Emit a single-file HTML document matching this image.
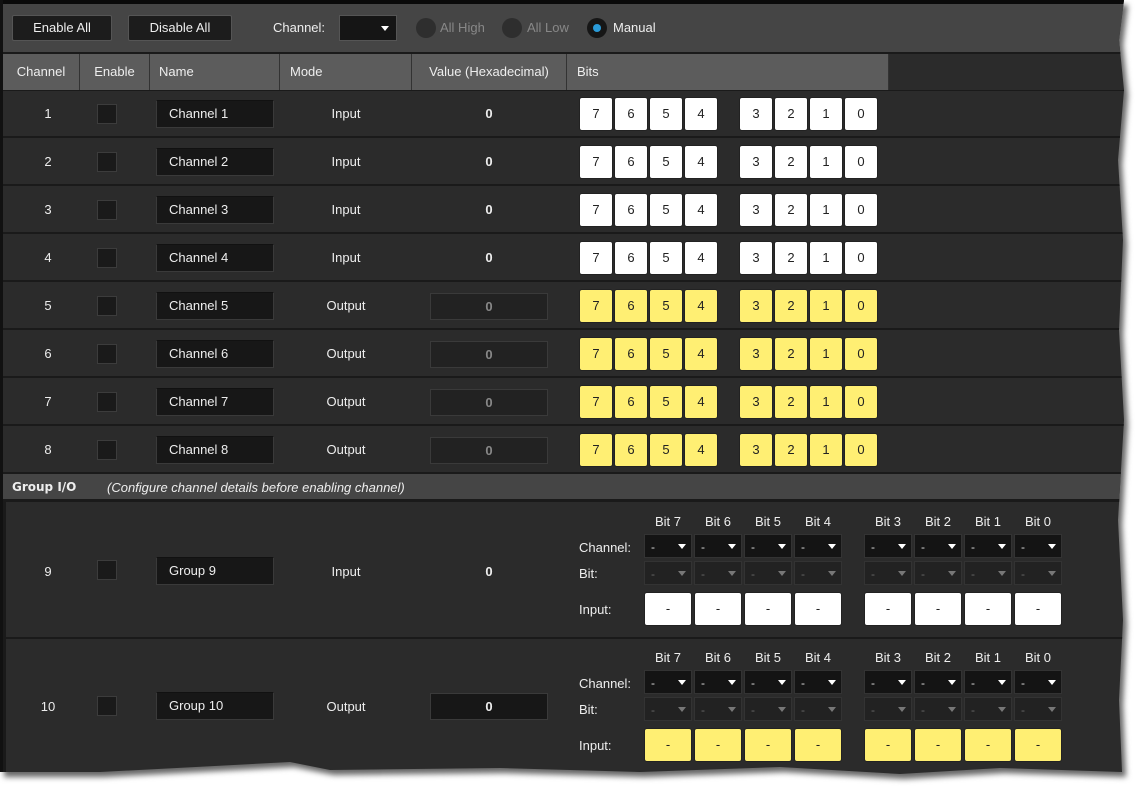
<!DOCTYPE html>
<html><head><meta charset="utf-8"><style>
*{box-sizing:border-box;margin:0;padding:0}
body{width:1141px;height:794px;background:#fff;position:relative;overflow:hidden;font-family:"Liberation Sans",sans-serif;font-size:13px;color:#eee}
.a{position:absolute}
.shape{clip-path:polygon(0 0,1124px 0,1119px 40px,1124px 90px,1118px 160px,1123px 240px,1119px 330px,1124px 420px,1118px 520px,1123px 620px,1119px 700px,1122px 772px,1000px 768px,900px 774px,780px 767px,640px 772px,500px 768px,330px 770px,290px 762px,100px 772px,0 772px);width:1124px;height:778px}
#shadowwrap{left:4px;top:5px;filter:blur(3px)}
#shadow{background:#666}
#wrap{left:0;top:0;background:#2b2b2b;overflow:hidden}
.btn{background:#1c1c1c;border:1px solid #555;border-radius:2px;color:#eee;text-align:center;line-height:24px;height:26px}
.hdr{background:#5c5c5c;color:#eee;line-height:36px;border-right:1px solid #333;padding-left:6px}
.sep{height:2px;background:#1a1a1a;left:3px;width:1121px}
.c{text-align:center;width:60px;margin-left:-30px}
.cb{width:20px;height:20px;background:#1a1a1a;border:1px solid #3c3c3c}
.nm{width:118px;height:28px;background:#171717;border:1px solid #3a3a3a;border-top-color:#111;padding-left:12px;line-height:26px}
.bit{width:34px;height:34px;background:#fff;border:1px solid #222;border-radius:3px;color:#222;text-align:center;line-height:32px}
.bit.y,.in.y{background:#ffef73}
.vb{width:118px;height:27px;background:#222;border:1px solid #3a3a3a;color:#888;font-weight:bold;text-align:center;line-height:25px}
.dd{width:48px;height:24px;background:#141414;border:1px solid #333;color:#ddd;font-size:12px;padding-left:6px;line-height:24px}
.dd:after{content:"";position:absolute;right:5px;top:9px;border:4px solid transparent;border-top:5px solid #fff}
.dd.g{background:#222;color:#666}
.dd.g:after{border-top-color:#777}
.in{width:48px;height:34px;background:#fff;border:1px solid #222;border-radius:3px;color:#222;text-align:center;line-height:32px}
.bl{width:48px;text-align:center;color:#eee}
</style></head><body>
<div id="shadowwrap" class="a"><div id="shadow" class="shape"></div></div>
<div id="wrap" class="a shape">
<div class="a" style="left:0;top:0;width:1124px;height:4px;background:#0a0a0a"></div>
<div class="a" style="left:0;top:0;width:3px;height:778px;background:#111"></div>
<div class="a" style="left:3px;top:4px;width:1121px;height:48px;background:#454545"></div>
<div class="a" style="left:3px;top:52px;width:1121px;height:2px;background:#1a1a1a"></div>
<div class="a btn" style="left:12px;top:15px;width:100px">Enable All</div>
<div class="a btn" style="left:128px;top:15px;width:104px">Disable All</div>
<div class="a" style="left:273px;top:20px">Channel:</div>
<div class="a" style="left:339px;top:15px;width:58px;height:26px;background:#151515;border:1px solid #555"></div>
<div class="a" style="left:381px;top:26px;border:4px solid transparent;border-top:5px solid #fff"></div>
<div class="a" style="left:416px;top:18px;width:20px;height:20px;border-radius:50%;background:#2e2e2e"></div>
<div class="a" style="left:440px;top:20px;color:#888">All High</div>
<div class="a" style="left:502px;top:18px;width:20px;height:20px;border-radius:50%;background:#2e2e2e"></div>
<div class="a" style="left:527px;top:20px;color:#888">All Low</div>
<div class="a" style="left:587px;top:18px;width:20px;height:20px;border-radius:50%;background:#161616"></div>
<div class="a" style="left:593px;top:24px;width:8px;height:8px;border-radius:50%;background:#2a9bd8"></div>
<div class="a" style="left:613px;top:20px;color:#eee">Manual</div>

<div class="a hdr" style="left:3px;top:54px;width:77px;text-align:center;padding:0">Channel</div>
<div class="a hdr" style="left:80px;top:54px;width:70px;text-align:center;padding:0">Enable</div>
<div class="a hdr" style="left:150px;top:54px;width:130px;padding-left:9px">Name</div>
<div class="a hdr" style="left:280px;top:54px;width:132px;padding-left:10px">Mode</div>
<div class="a hdr" style="left:412px;top:54px;width:155px;text-align:center;padding:0">Value (Hexadecimal)</div>
<div class="a hdr" style="left:567px;top:54px;width:322px;padding-left:10px">Bits</div>
<div class="a hdr" style="left:889px;top:54px;width:235px;border:none"></div>
<div class="a" style="left:3px;top:90px;width:1121px;height:1px;background:#1a1a1a"></div>

<div class="a" style="left:0;top:90px">
<div class="a c" style="left:48px;top:16px">1</div><div class="a cb" style="left:97px;top:14px"></div><div class="a nm" style="left:156px;top:10px">Channel 1</div><div class="a c" style="left:346px;top:16px">Input</div><div class="a c" style="left:489px;top:16px;font-weight:bold">0</div>
<div class="a bit" style="left:579px;top:7px">7</div><div class="a bit" style="left:614px;top:7px">6</div><div class="a bit" style="left:649px;top:7px">5</div><div class="a bit" style="left:684px;top:7px">4</div><div class="a bit" style="left:739px;top:7px">3</div><div class="a bit" style="left:774px;top:7px">2</div><div class="a bit" style="left:809px;top:7px">1</div><div class="a bit" style="left:844px;top:7px">0</div>
<div class="a sep" style="top:46px"></div></div>
<div class="a" style="left:0;top:138px">
<div class="a c" style="left:48px;top:16px">2</div><div class="a cb" style="left:97px;top:14px"></div><div class="a nm" style="left:156px;top:10px">Channel 2</div><div class="a c" style="left:346px;top:16px">Input</div><div class="a c" style="left:489px;top:16px;font-weight:bold">0</div>
<div class="a bit" style="left:579px;top:7px">7</div><div class="a bit" style="left:614px;top:7px">6</div><div class="a bit" style="left:649px;top:7px">5</div><div class="a bit" style="left:684px;top:7px">4</div><div class="a bit" style="left:739px;top:7px">3</div><div class="a bit" style="left:774px;top:7px">2</div><div class="a bit" style="left:809px;top:7px">1</div><div class="a bit" style="left:844px;top:7px">0</div>
<div class="a sep" style="top:46px"></div></div>
<div class="a" style="left:0;top:186px">
<div class="a c" style="left:48px;top:16px">3</div><div class="a cb" style="left:97px;top:14px"></div><div class="a nm" style="left:156px;top:10px">Channel 3</div><div class="a c" style="left:346px;top:16px">Input</div><div class="a c" style="left:489px;top:16px;font-weight:bold">0</div>
<div class="a bit" style="left:579px;top:7px">7</div><div class="a bit" style="left:614px;top:7px">6</div><div class="a bit" style="left:649px;top:7px">5</div><div class="a bit" style="left:684px;top:7px">4</div><div class="a bit" style="left:739px;top:7px">3</div><div class="a bit" style="left:774px;top:7px">2</div><div class="a bit" style="left:809px;top:7px">1</div><div class="a bit" style="left:844px;top:7px">0</div>
<div class="a sep" style="top:46px"></div></div>
<div class="a" style="left:0;top:234px">
<div class="a c" style="left:48px;top:16px">4</div><div class="a cb" style="left:97px;top:14px"></div><div class="a nm" style="left:156px;top:10px">Channel 4</div><div class="a c" style="left:346px;top:16px">Input</div><div class="a c" style="left:489px;top:16px;font-weight:bold">0</div>
<div class="a bit" style="left:579px;top:7px">7</div><div class="a bit" style="left:614px;top:7px">6</div><div class="a bit" style="left:649px;top:7px">5</div><div class="a bit" style="left:684px;top:7px">4</div><div class="a bit" style="left:739px;top:7px">3</div><div class="a bit" style="left:774px;top:7px">2</div><div class="a bit" style="left:809px;top:7px">1</div><div class="a bit" style="left:844px;top:7px">0</div>
<div class="a sep" style="top:46px"></div></div>
<div class="a" style="left:0;top:282px">
<div class="a c" style="left:48px;top:16px">5</div><div class="a cb" style="left:97px;top:14px"></div><div class="a nm" style="left:156px;top:10px">Channel 5</div><div class="a c" style="left:346px;top:16px">Output</div><div class="a vb" style="left:430px;top:11px">0</div>
<div class="a bit y" style="left:579px;top:7px">7</div><div class="a bit y" style="left:614px;top:7px">6</div><div class="a bit y" style="left:649px;top:7px">5</div><div class="a bit y" style="left:684px;top:7px">4</div><div class="a bit y" style="left:739px;top:7px">3</div><div class="a bit y" style="left:774px;top:7px">2</div><div class="a bit y" style="left:809px;top:7px">1</div><div class="a bit y" style="left:844px;top:7px">0</div>
<div class="a sep" style="top:46px"></div></div>
<div class="a" style="left:0;top:330px">
<div class="a c" style="left:48px;top:16px">6</div><div class="a cb" style="left:97px;top:14px"></div><div class="a nm" style="left:156px;top:10px">Channel 6</div><div class="a c" style="left:346px;top:16px">Output</div><div class="a vb" style="left:430px;top:11px">0</div>
<div class="a bit y" style="left:579px;top:7px">7</div><div class="a bit y" style="left:614px;top:7px">6</div><div class="a bit y" style="left:649px;top:7px">5</div><div class="a bit y" style="left:684px;top:7px">4</div><div class="a bit y" style="left:739px;top:7px">3</div><div class="a bit y" style="left:774px;top:7px">2</div><div class="a bit y" style="left:809px;top:7px">1</div><div class="a bit y" style="left:844px;top:7px">0</div>
<div class="a sep" style="top:46px"></div></div>
<div class="a" style="left:0;top:378px">
<div class="a c" style="left:48px;top:16px">7</div><div class="a cb" style="left:97px;top:14px"></div><div class="a nm" style="left:156px;top:10px">Channel 7</div><div class="a c" style="left:346px;top:16px">Output</div><div class="a vb" style="left:430px;top:11px">0</div>
<div class="a bit y" style="left:579px;top:7px">7</div><div class="a bit y" style="left:614px;top:7px">6</div><div class="a bit y" style="left:649px;top:7px">5</div><div class="a bit y" style="left:684px;top:7px">4</div><div class="a bit y" style="left:739px;top:7px">3</div><div class="a bit y" style="left:774px;top:7px">2</div><div class="a bit y" style="left:809px;top:7px">1</div><div class="a bit y" style="left:844px;top:7px">0</div>
<div class="a sep" style="top:46px"></div></div>
<div class="a" style="left:0;top:426px">
<div class="a c" style="left:48px;top:16px">8</div><div class="a cb" style="left:97px;top:14px"></div><div class="a nm" style="left:156px;top:10px">Channel 8</div><div class="a c" style="left:346px;top:16px">Output</div><div class="a vb" style="left:430px;top:11px">0</div>
<div class="a bit y" style="left:579px;top:7px">7</div><div class="a bit y" style="left:614px;top:7px">6</div><div class="a bit y" style="left:649px;top:7px">5</div><div class="a bit y" style="left:684px;top:7px">4</div><div class="a bit y" style="left:739px;top:7px">3</div><div class="a bit y" style="left:774px;top:7px">2</div><div class="a bit y" style="left:809px;top:7px">1</div><div class="a bit y" style="left:844px;top:7px">0</div>
</div>

<div class="a" style="left:3px;top:472px;width:1121px;height:30px;background:#454545;border-top:2px solid #1a1a1a;border-bottom:3px solid #1a1a1a"></div>
<div class="a" style="left:12px;top:480px;font-weight:bold;font-family:'DejaVu Sans',sans-serif;font-size:12px">Group I/O</div>
<div class="a" style="left:107px;top:480px;font-style:italic">(Configure channel details before enabling channel)</div>
<div class="a" style="left:3px;top:502px;width:3px;height:276px;background:#1a1a1a"></div>

<div class="a" style="left:0;top:502px">
<div class="a c" style="left:48px;top:62px">9</div><div class="a cb" style="left:97px;top:58px"></div><div class="a nm" style="left:156px;top:55px">Group 9</div><div class="a c" style="left:346px;top:62px">Input</div><div class="a c" style="left:489px;top:62px;font-weight:bold">0</div>
<div class="a" style="left:579px;top:38px">Channel:</div><div class="a" style="left:579px;top:64px">Bit:</div><div class="a" style="left:579px;top:100px">Input:</div>
<div class="a bl" style="left:644px;top:12px">Bit 7</div><div class="a bl" style="left:694px;top:12px">Bit 6</div><div class="a bl" style="left:744px;top:12px">Bit 5</div><div class="a bl" style="left:794px;top:12px">Bit 4</div><div class="a bl" style="left:864px;top:12px">Bit 3</div><div class="a bl" style="left:914px;top:12px">Bit 2</div><div class="a bl" style="left:964px;top:12px">Bit 1</div><div class="a bl" style="left:1014px;top:12px">Bit 0</div>
<div class="a dd" style="left:644px;top:32px">-</div><div class="a dd" style="left:694px;top:32px">-</div><div class="a dd" style="left:744px;top:32px">-</div><div class="a dd" style="left:794px;top:32px">-</div><div class="a dd" style="left:864px;top:32px">-</div><div class="a dd" style="left:914px;top:32px">-</div><div class="a dd" style="left:964px;top:32px">-</div><div class="a dd" style="left:1014px;top:32px">-</div>
<div class="a dd g" style="left:644px;top:59px">-</div><div class="a dd g" style="left:694px;top:59px">-</div><div class="a dd g" style="left:744px;top:59px">-</div><div class="a dd g" style="left:794px;top:59px">-</div><div class="a dd g" style="left:864px;top:59px">-</div><div class="a dd g" style="left:914px;top:59px">-</div><div class="a dd g" style="left:964px;top:59px">-</div><div class="a dd g" style="left:1014px;top:59px">-</div>
<div class="a in" style="left:644px;top:90px">-</div><div class="a in" style="left:694px;top:90px">-</div><div class="a in" style="left:744px;top:90px">-</div><div class="a in" style="left:794px;top:90px">-</div><div class="a in" style="left:864px;top:90px">-</div><div class="a in" style="left:914px;top:90px">-</div><div class="a in" style="left:964px;top:90px">-</div><div class="a in" style="left:1014px;top:90px">-</div>
<div class="a sep" style="top:135px"></div></div>

<div class="a" style="left:0;top:637px">
<div class="a c" style="left:48px;top:62px">10</div><div class="a cb" style="left:97px;top:59px"></div><div class="a nm" style="left:156px;top:55px">Group 10</div><div class="a c" style="left:346px;top:62px">Output</div><div class="a vb" style="left:430px;top:56px;background:#171717;color:#eee">0</div>
<div class="a" style="left:579px;top:39px">Channel:</div><div class="a" style="left:579px;top:65px">Bit:</div><div class="a" style="left:579px;top:101px">Input:</div>
<div class="a bl" style="left:644px;top:13px">Bit 7</div><div class="a bl" style="left:694px;top:13px">Bit 6</div><div class="a bl" style="left:744px;top:13px">Bit 5</div><div class="a bl" style="left:794px;top:13px">Bit 4</div><div class="a bl" style="left:864px;top:13px">Bit 3</div><div class="a bl" style="left:914px;top:13px">Bit 2</div><div class="a bl" style="left:964px;top:13px">Bit 1</div><div class="a bl" style="left:1014px;top:13px">Bit 0</div>
<div class="a dd" style="left:644px;top:33px">-</div><div class="a dd" style="left:694px;top:33px">-</div><div class="a dd" style="left:744px;top:33px">-</div><div class="a dd" style="left:794px;top:33px">-</div><div class="a dd" style="left:864px;top:33px">-</div><div class="a dd" style="left:914px;top:33px">-</div><div class="a dd" style="left:964px;top:33px">-</div><div class="a dd" style="left:1014px;top:33px">-</div>
<div class="a dd g" style="left:644px;top:60px">-</div><div class="a dd g" style="left:694px;top:60px">-</div><div class="a dd g" style="left:744px;top:60px">-</div><div class="a dd g" style="left:794px;top:60px">-</div><div class="a dd g" style="left:864px;top:60px">-</div><div class="a dd g" style="left:914px;top:60px">-</div><div class="a dd g" style="left:964px;top:60px">-</div><div class="a dd g" style="left:1014px;top:60px">-</div>
<div class="a in y" style="left:644px;top:91px">-</div><div class="a in y" style="left:694px;top:91px">-</div><div class="a in y" style="left:744px;top:91px">-</div><div class="a in y" style="left:794px;top:91px">-</div><div class="a in y" style="left:864px;top:91px">-</div><div class="a in y" style="left:914px;top:91px">-</div><div class="a in y" style="left:964px;top:91px">-</div><div class="a in y" style="left:1014px;top:91px">-</div>
</div>
</div>
</body></html>
